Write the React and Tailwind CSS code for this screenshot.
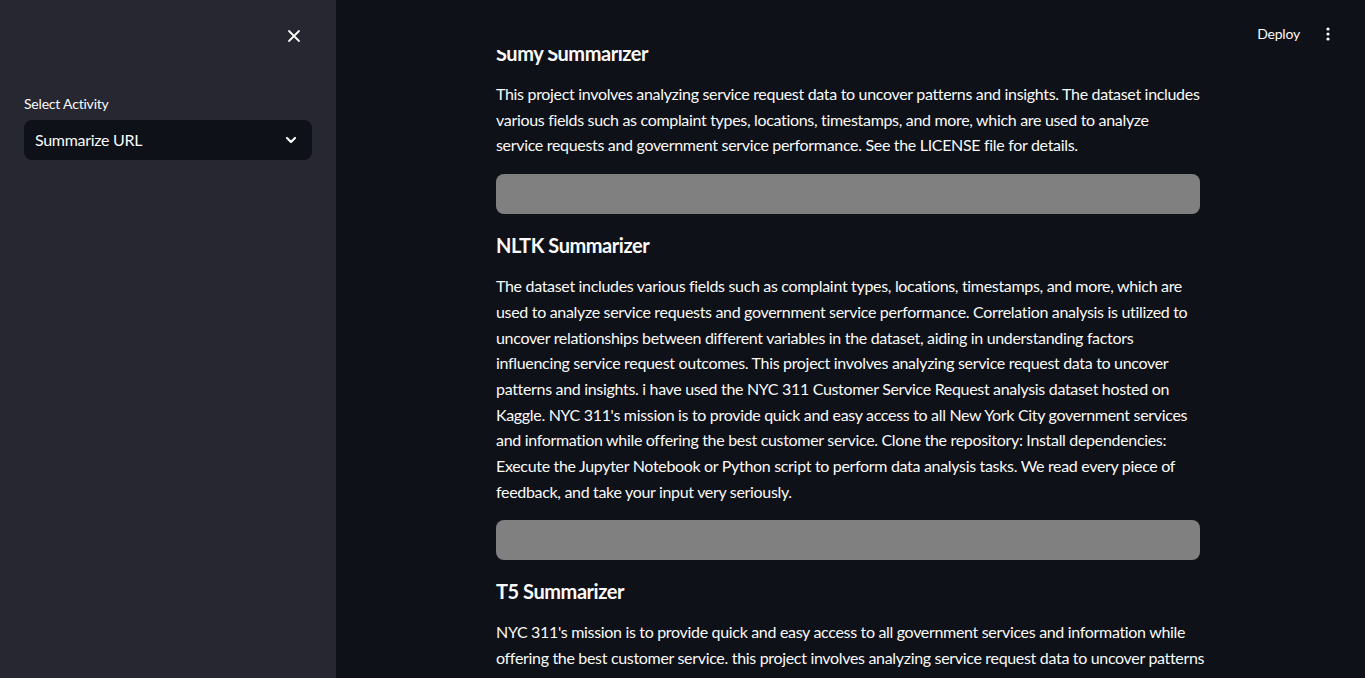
import React from "react";

const font = { fontFamily: "Lato, 'Liberation Sans', sans-serif" };

function Lines({ lines }) {
  return (
    <p className="text-[16px] leading-[25.7px] tracking-[-0.32px] text-[#fafafa] mb-4">
      {lines.map((l, i) => (
        <span key={i} className="block whitespace-nowrap">
          {l}
        </span>
      ))}
    </p>
  );
}

function Heading({ children }) {
  return (
    <h3 className="text-[20px] leading-[24px] font-bold tracking-[-0.45px] text-[#fafafa] mb-4">
      {children}
    </h3>
  );
}

function Bar() {
  return <div className="h-10 w-full rounded-lg bg-[#808080] mb-[19px]" />;
}

export default function App() {
  return (
    <div className="flex h-[678px] w-[1365px] overflow-hidden bg-[#0e1117]" style={font}>
      <aside className="w-[336px] shrink-0 bg-[#262730] flex flex-col px-6">
        <div className="flex justify-end pt-[29px] pr-[11px]">
          <svg width="14" height="14" viewBox="0 0 14 14" fill="none" stroke="#fafafa" strokeWidth="1.8" strokeLinecap="round">
            <path d="M2 2 L12 12 M12 2 L2 12" />
          </svg>
        </div>
        <label className="mt-[51px] text-[14px] leading-[20px] tracking-[-0.2px] text-[#fafafa]">Select Activity</label>
        <div className="mt-[6px] h-10 rounded-lg bg-[#0e1117] flex items-center justify-between pl-[11px] pr-[15px]">
          <span className="text-[16px] tracking-[-0.3px] text-[#fafafa]">Summarize URL</span>
          <svg width="12" height="8" viewBox="0 0 12 8" fill="none" stroke="#fafafa" strokeWidth="2.2" strokeLinecap="round" strokeLinejoin="round">
            <path d="M2 2 L6 6 L10 2" />
          </svg>
        </div>
      </aside>
      <main className="relative flex-1 overflow-hidden">
        <header className="absolute left-0 right-0 top-0 h-[50px] bg-[#0e1117] flex items-start justify-end pr-[35px] pt-[24px] gap-[26px] z-10">
          <span className="text-[14px] leading-[20px] tracking-[-0.2px] text-[#fafafa]">Deploy</span>
          <svg className="mt-[3px]" width="4" height="14" viewBox="0 0 4 14" fill="#fafafa">
            <circle cx="2" cy="2" r="1.6" />
            <circle cx="2" cy="7" r="1.6" />
            <circle cx="2" cy="12" r="1.6" />
          </svg>
        </header>
        <div className="ml-[160px] w-[704px] pt-[41px] flex flex-col">
          <Heading>Sumy Summarizer</Heading>
          <Lines
            lines={[
              "This project involves analyzing service request data to uncover patterns and insights. The dataset includes",
              "various fields such as complaint types, locations, timestamps, and more, which are used to analyze",
              "service requests and government service performance. See the LICENSE file for details.",
            ]}
          />
          <Bar />
          <Heading>NLTK Summarizer</Heading>
          <Lines
            lines={[
              "The dataset includes various fields such as complaint types, locations, timestamps, and more, which are",
              "used to analyze service requests and government service performance. Correlation analysis is utilized to",
              "uncover relationships between different variables in the dataset, aiding in understanding factors",
              "influencing service request outcomes. This project involves analyzing service request data to uncover",
              "patterns and insights. i have used the NYC 311 Customer Service Request analysis dataset hosted on",
              "Kaggle. NYC 311's mission is to provide quick and easy access to all New York City government services",
              "and information while offering the best customer service. Clone the repository: Install dependencies:",
              "Execute the Jupyter Notebook or Python script to perform data analysis tasks. We read every piece of",
              "feedback, and take your input very seriously.",
            ]}
          />
          <Bar />
          <Heading>T5 Summarizer</Heading>
          <Lines
            lines={[
              "NYC 311's mission is to provide quick and easy access to all government services and information while",
              "offering the best customer service. this project involves analyzing service request data to uncover patterns",
            ]}
          />
        </div>
      </main>
    </div>
  );
}
